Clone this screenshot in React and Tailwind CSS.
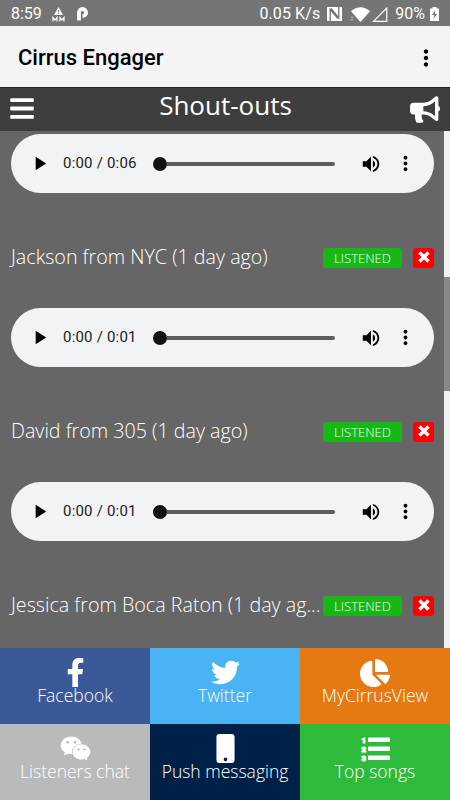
import React from 'react';
import { FaFacebookF, FaTwitter, FaChartPie, FaWeixin, FaMobile, FaBars, FaBullhorn } from 'react-icons/fa';
import { MdPlayArrow, MdVolumeUp, MdMoreVert } from 'react-icons/md';

const NumberedList = ({ className }) => (
    <svg className={className} viewBox="0 0 30 29" fill="currentColor">
        <rect x="8" y="3.5" width="22" height="4.5" rx="0.8" />
        <rect x="8" y="12.5" width="22" height="4.5" rx="0.8" />
        <rect x="8" y="21.5" width="22" height="4.5" rx="0.8" />
        <g fontFamily="Roboto, sans-serif" fontWeight="900" fontSize="7.6" stroke="currentColor" strokeWidth="1">
            <text x="1.5" y="8.6">1</text>
            <text x="1.5" y="17.6">2</text>
            <text x="1.5" y="26.6">3</text>
        </g>
    </svg>
);

const shoutouts = [
    { id: 1, duration: '0:06', title: 'Jackson from NYC (1 day ago)' },
    { id: 2, duration: '0:01', title: 'David from 305 (1 day ago)' },
    { id: 3, duration: '0:01', title: 'Jessica from Boca Raton (1 day ag...' },
];

const links = [
    { label: 'Facebook', Icon: FaFacebookF, bg: 'bg-[#3b5998]', size: 'size-[29px]' },
    { label: 'Twitter', Icon: FaTwitter, bg: 'bg-[#4ab3f4]', size: 'size-[29px]' },
    { label: 'MyCirrusView', Icon: FaChartPie, bg: 'bg-[#e67a12]', size: 'size-[30px]' },
    { label: 'Listeners chat', Icon: FaWeixin, bg: 'bg-[#b9babc]', size: 'size-[31px]' },
    { label: 'Push messaging', Icon: FaMobile, bg: 'bg-[#002147]', size: 'size-[29px]' },
    { label: 'Top songs', Icon: NumberedList, bg: 'bg-[#2ebb3b]', size: 'w-[30px] h-[29px]' },
];

const StatusBar = () => (
    <div className="h-[26px] shrink-0 bg-[#757575] text-white flex items-center px-[11px] pt-[2px] text-[16px] font-['Roboto',sans-serif]">
        <span>8:59</span>
        <svg className="ml-[10px] w-[13px] h-[15px]" viewBox="0 0 13 15" fill="none">
            <path d="M6.5 0L11 8H2Z" fill="white" />
            <path d="M6.5 3v2.5M6.5 6.2v1" stroke="#757575" />
            <path d="M1 14.500v-4l2 2.500L5 10.500v4M8 14.500v-4l2 2.500L12 10.500v4" stroke="white" strokeWidth="1.2" />
        </svg>
        <svg className="ml-[12px] w-[12px] h-[14px]" viewBox="0 0 12 14">
            <path d="M2 13.500V5.500a3.600 3.500 0 0 1 3.600-3.500a3.500 3.500 0 0 1 0 7" fill="none" stroke="white" strokeWidth="3.800" />
        </svg>
        <span className="ml-auto tracking-[0.1px]">0.05 K/s</span>
        <svg className="ml-[7px] w-[15px] h-[14px]" viewBox="0 0 15 14">
            <path d="M0 0H15V14H0Z" fill="white" />
            <path d="M3.200 14V2.500L11 11.500M4 1.500L11.800 11V0" fill="none" stroke="#757575" strokeWidth="1.3" />
        </svg>
        <svg className="ml-[8px] w-[20px] h-[15px]" viewBox="0 0 20 15">
            <path d="M1 4.3Q10.500-4 20 4.300L10.500 15Z" fill="white" />
            <path d="M.3 11L2 9l1.700 2zM.3 12L2 14l1.700-2z" fill="#aaa" />
        </svg>
        <svg className="ml-[2px] w-[16px] h-[15px]" viewBox="0 0 16 15">
            <path d="M1.500 14.300H14.800V1Z" fill="none" stroke="white" strokeWidth="1.200" />
        </svg>
        <span className="ml-[7px]">90%</span>
        <svg className="ml-[5px] w-[9px] h-[14px]" viewBox="0 0 9 14">
            <path d="M2.500 0h4v1.500H9V14H0V1.500h2.500z" fill="white" />
            <path d="M5.500 3L2 8h2.200L3.500 12L7 7H4.800z" fill="#757575" />
        </svg>
    </div>
);

const AudioPlayer = ({ duration }) => (
    <div className="h-[59px] rounded-full bg-[#f1f3f4] text-black flex items-center pl-[17px] pr-[17px]">
        <MdPlayArrow className="size-[23px] shrink-0" />
        <span className="ml-[12px] w-[75px] text-[15px] tracking-[0.2px] text-[#222] whitespace-nowrap font-['Roboto',sans-serif]">0:00 / {duration}</span>
        <div className="ml-[15px] w-[182px] flex items-center">
            <div className="size-[14px] shrink-0 rounded-full bg-[#111]" />
            <div className="h-1 grow rounded-r-full bg-[#5c5c5c]" />
        </div>
        <MdVolumeUp className="ml-[25px] size-[22px] shrink-0" />
        <MdMoreVert className="ml-auto size-[23px] shrink-0" />
    </div>
);

const Shoutout = ({ duration, title }) => (
    <div className="h-[174px] shrink-0">
        <AudioPlayer duration={duration} />
        <div className="mt-[50px] h-7 flex items-center">
            <div className="w-[312px] shrink-0 whitespace-nowrap text-[19.7px] leading-7 font-light">{title}</div>
            <span className="mt-[2px] w-[79px] h-5 shrink-0 rounded-[3px] bg-[#17b717] text-center text-[13px] leading-5 font-light">LISTENED</span>
            <button className="mt-[2px] ml-[11px] w-[21px] h-[20px] shrink-0 rounded-[3px] bg-[#ff0000] flex items-center justify-center">
                <svg className="size-[12px] mb-[2px]" viewBox="0 0 12 12">
                    <path d="M1.500 1.500L10.500 10.500M10.500 1.500L1.500 10.500" stroke="white" strokeWidth="3.400" />
                </svg>
            </button>
        </div>
    </div>
);

const App = () => {
    return (
        <div className="w-[450px] h-[800px] overflow-hidden flex flex-col bg-[#666666] text-white font-['Open_Sans',sans-serif]">
            <StatusBar />
            <div className="h-[62px] shrink-0 bg-[#f4f4f4] text-black flex items-center justify-between pl-[18px] pr-[11px] pt-[2px] border-b border-[#222]">
                <h1 className="text-[22px] font-medium font-['Roboto',sans-serif]">Cirrus Engager</h1>
                <MdMoreVert className="size-[26px]" />
            </div>
            <div className="h-[43px] shrink-0 bg-[#3e3e3e] flex items-center justify-between pl-[10px] pr-[10px]">
                <FaBars className="w-[24px] h-[27px] -mt-[3px]" />
                <h2 className="ml-[7px] -mt-[9px] text-[26px] leading-8">Shout-outs</h2>
                <FaBullhorn className="w-[30px] h-[27px] -mt-px" />
            </div>
            <div className="h-[517px] shrink-0 flex overflow-hidden">
                <div className="grow min-w-0 pt-[3px] pl-[11px] pr-[10px] flex flex-col overflow-hidden">
                    {shoutouts.map(item => (
                        <Shoutout key={item.id} duration={item.duration} title={item.title} />
                    ))}
                </div>
                <div className="w-[6px] shrink-0 bg-[#f1f1f1] pt-[146px]">
                    <div className="h-[114px] bg-[#888888]" />
                </div>
            </div>
            <div className="grid grid-cols-3 grid-rows-2 h-[152px] shrink-0">
                {links.map(({ label, Icon, bg, size }) => (
                    <a key={label} className={`${bg} flex flex-col items-center pt-[10px]`}>
                        <div className="h-[29px] flex items-center">
                            <Icon className={size} />
                        </div>
                        <span className="-mt-[4px] text-[17.5px] leading-6 font-light">{label}</span>
                    </a>
                ))}
            </div>
        </div>
    );
};

export default App;
